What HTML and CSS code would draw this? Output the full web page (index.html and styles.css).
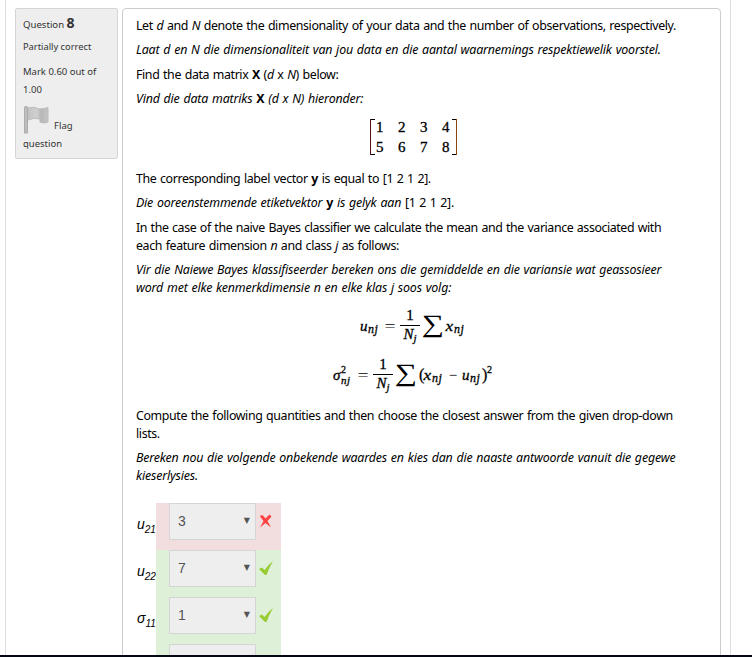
FILE: index.html
```html
<!DOCTYPE html>
<html lang="en">
<head>
<meta charset="utf-8">
<title>Question 8</title>
<link rel="stylesheet" href="styles.css">
</head>
<body>
<main class="page">
  <aside class="info">
    <h3 class="no">Question <b>8</b></h3>
    <div class="state">Partially correct</div>
    <div class="grade">Mark 0.60 out of<br>1.00</div>
    <div class="flag"><svg width="27" height="30" viewBox="0 0 27 30"><defs><linearGradient id="cloth"><stop offset="0" stop-color="#c4c4c4"/><stop offset=".45" stop-color="#d0d0d0"/><stop offset=".65" stop-color="#b7b7b7"/><stop offset="1" stop-color="#c4c4c4"/></linearGradient></defs><path d="M5 3Q11 1 16 4Q21 4 25 2.500V17Q21 19 17 17V14Q11 12 5 15Z" fill="url(#cloth)" stroke="#bbb"/><path d="M1.500 2Q3 .5 4.500 2V28H1.500Z" fill="#bdbdbd" stroke="#adadad"/></svg><span>Flag</span><br>question</div>
  </aside>
  <section class="content">
    <p>Let <i>d</i> and <i>N</i> denote the dimensionality of your data and the number of observations, respectively.</p>
    <p class="it">Laat d en N die dimensionaliteit van jou data en die aantal waarnemings respektiewelik voorstel.</p>
    <p>Find the data matrix <b>X</b> (<i>d</i> x <i>N</i>) below:</p>
    <p class="it">Vind die data matriks <b>X</b> (d x N) hieronder:</p>
    <div class="matrix"><span>1</span><span>2</span><span>3</span><span>4</span><span>5</span><span>6</span><span>7</span><span>8</span></div>
    <p>The corresponding label vector <b>y</b> is equal to [1 2 1 2].</p>
    <p class="it">Die ooreenstemmende etiketvektor <b>y</b> is gelyk aan <span class="up">[1 2 1 2].</span></p>
    <p><span class="tight">In the case of the naive Bayes classifier we calculate the mean and the variance associated with</span><br>each feature dimension <i>n</i> and class <i>j</i> as follows:</p>
    <p class="it">Vir die Naiewe Bayes klassifiseerder bereken ons die gemiddelde en die variansie wat geassosieer<br>word met elke kenmerkdimensie n en elke klas j soos volg:</p>
    <div class="eq eq1">
      <span class="v">u</span><span class="sub">nj</span><span class="op">=</span>
      <span class="frac"><span class="num">1</span><span class="den"><i>N</i><small>j</small></span></span>
      <span class="sum"><span>∑</span></span><span class="v x">x</span><span class="sub">nj</span>
    </div>
    <div class="eq eq2">
      <span class="v">σ</span><span class="scripts"><small>2</small><i>nj</i></span><span class="op">=</span>
      <span class="frac"><span class="num">1</span><span class="den"><i>N</i><small>j</small></span></span>
      <span class="sum"><span>∑</span></span><span class="paren">(</span><span class="v x">x</span><span class="sub">nj</span><span class="op minus">−</span><span class="v">u</span><span class="sub">nj</span><span class="paren">)</span><span class="sup">2</span>
    </div>
    <p>Compute the following quantities and then choose the closest answer from the given drop-down<br>lists.</p>
    <p class="it">Bereken nou die volgende onbekende waardes en kies dan die naaste antwoorde vanuit die gegewe<br>kieserlysies.</p>
    <div class="answers">
      <div class="row wrong"><span class="label">u<small>21</small></span><div class="cell"><div class="select">3<em>▼</em></div><svg width="14" height="16" viewBox="0 0 14 16"><path d="M1 3.500Q2 1.500 4 2.500L6.500 5.500L10.500 1.500L12.500 3.500L8.500 8L12 14.500L6.500 10L1 14.500L4.500 8Z" fill="#ff4141"/></svg></div></div>
      <div class="row"><span class="label">u<small>22</small></span><div class="cell"><div class="select">7<em>▼</em></div><svg width="14" height="16" viewBox="0 0 14 16"><path d="M0 9L3 7.500L5.500 10Q9 5 14 1Q10 8 7.500 15H6Q3 12 0 9Z" fill="#99cc33"/></svg></div></div>
      <div class="row"><span class="label">σ<small>11</small></span><div class="cell"><div class="select">1<em>▼</em></div><svg width="14" height="16" viewBox="0 0 14 16"><path d="M0 9L3 7.500L5.500 10Q9 5 14 1Q10 8 7.500 15H6Q3 12 0 9Z" fill="#99cc33"/></svg></div></div>
      <div class="row"><span class="label"></span><div class="cell"><div class="select"></div></div></div>
    </div>
  </section>
</main>
</body>
</html>
```
FILE: styles.css
```css
* { box-sizing: border-box; }
body { margin: 0; background: #fff; }
.page { width: 752px; height: 657px; overflow: hidden; border-bottom: 2px solid #030711; display: grid; grid-template-columns: 103px 599px; column-gap: 4px; padding: 8px 0 0 15px; align-items: start; background: linear-gradient(#ddd, #ddd) 5px 0 / 1px 100% no-repeat, linear-gradient(#ddd, #ddd) 730px 0 / 1px 100% no-repeat; font-family: "Noto Sans", sans-serif; }
.info { height: 151px; border: 1px solid #d5d5d5; border-radius: 2px; background: #eee; padding: 4px 7px; color: #333; font-size: 9.5px; line-height: 18px; }
.no { margin: 0; font-weight: normal; font-size: 9.6px; line-height: 19px; }
.no b { font-size: 14px; }
.state { margin-top: 4px; font-size: 9.3px; }
.grade { margin-top: 7px; }
.flag { margin-top: 6px; }
.flag svg { vertical-align: -6px; margin-right: 4px; }
.content { height: 700px; border: 1px solid #ccc; border-radius: 4px; padding: 8px 13px; color: #000; font-size: 12.4px; line-height: 18.2px; }
.content p { margin: 0 0 6.1px; white-space: nowrap; letter-spacing: -.38px; word-spacing: .8px; }
.tight { letter-spacing: -.42px; }
.content .it { font-style: italic; letter-spacing: -.17px; }
.it b, .up { font-style: normal; }
.content .up { letter-spacing: -.3px; }
.matrix { width: 87px; height: 36px; margin: 11px 0 15px 234px; display: grid; grid-template-columns: repeat(4, 22px); grid-template-rows: 16px 20px; font: 15px/17px "Liberation Serif", serif; -webkit-text-stroke: .3px #000; background: linear-gradient(#000,#000) 0 0 / 4px 1px no-repeat, linear-gradient(#000,#000) 0 100% / 4px 1px no-repeat, linear-gradient(#000,#000) 100% 0 / 4px 1px no-repeat, linear-gradient(#000,#000) 100% 100% / 4px 1px no-repeat; border-left: 1px solid #511; border-right: 1px solid #841; }
.matrix span { padding-left: 5px; }
.matrix span:nth-child(n+5) { line-height: 25px; }
.eq { display: flex; align-items: center; height: 49px; font: 15px/18px "Liberation Serif", serif; -webkit-text-stroke: .3px #000; }
.eq1 { margin: -2px 0 0 224px; }
.eq2 { margin: 0 0 7px 197px; }
.v { width: 8px; font-style: italic; }
.x { transform: scaleX(1.15); }
.sub { width: 12px; font-size: 12px; font-style: italic; letter-spacing: .6px; transform: translateY(3px); }
.op { width: 20px; text-align: center; transform: scaleX(1.3); -webkit-text-stroke: 0; }
.minus { width: 18px; transform: none; }
.frac { width: 20px; display: flex; flex-direction: column; align-items: center; }
.num { height: 18px; width: 20px; text-align: center; border-bottom: 1px solid #000; line-height: 15px; }
.den { height: 18px; line-height: 17px; white-space: nowrap; }
.den small { font-size: 11px; font-style: italic; vertical-align: -3px; line-height: 0; }
.sum { width: 26px; display: flex; justify-content: center; font-size: 25px; line-height: 25px; -webkit-text-stroke: 0; }
.sum span { transform: translateY(-3px) scaleX(1.25); }
.scripts { width: 12px; display: flex; flex-direction: column; gap: 1px; font-size: 11px; line-height: 11px; letter-spacing: .4px; }
.scripts small { font-size: 10px; line-height: 9px; }
.paren { width: 5px; font-size: 16px; }
.sup { font-size: 10px; transform: translateY(-5px); }
.answers { margin-top: 17px; }
.row { display: grid; grid-template-columns: 20px 125px; height: 47px; }
.label { font: italic 14px/18px "Liberation Sans", sans-serif; padding: 12px 0 0 1px; white-space: nowrap; }
.label small { font-size: 10px; vertical-align: -4px; line-height: 0; }
.cell { background: #dff0d8; padding-left: 13px; display: flex; align-items: flex-start; }
.wrong .cell { background: #f2dede; }
.cell svg { margin: 10px 0 0 3px; }
.select { width: 87px; height: 37px; background: #eee; border: 1px solid #d5d5d5; display: flex; justify-content: space-between; padding: 0 5px 0 8px; font: 14px/35px "Liberation Sans", sans-serif; color: #555; }
.select em { font: 8px/34px "DejaVu Sans", sans-serif; }
```
